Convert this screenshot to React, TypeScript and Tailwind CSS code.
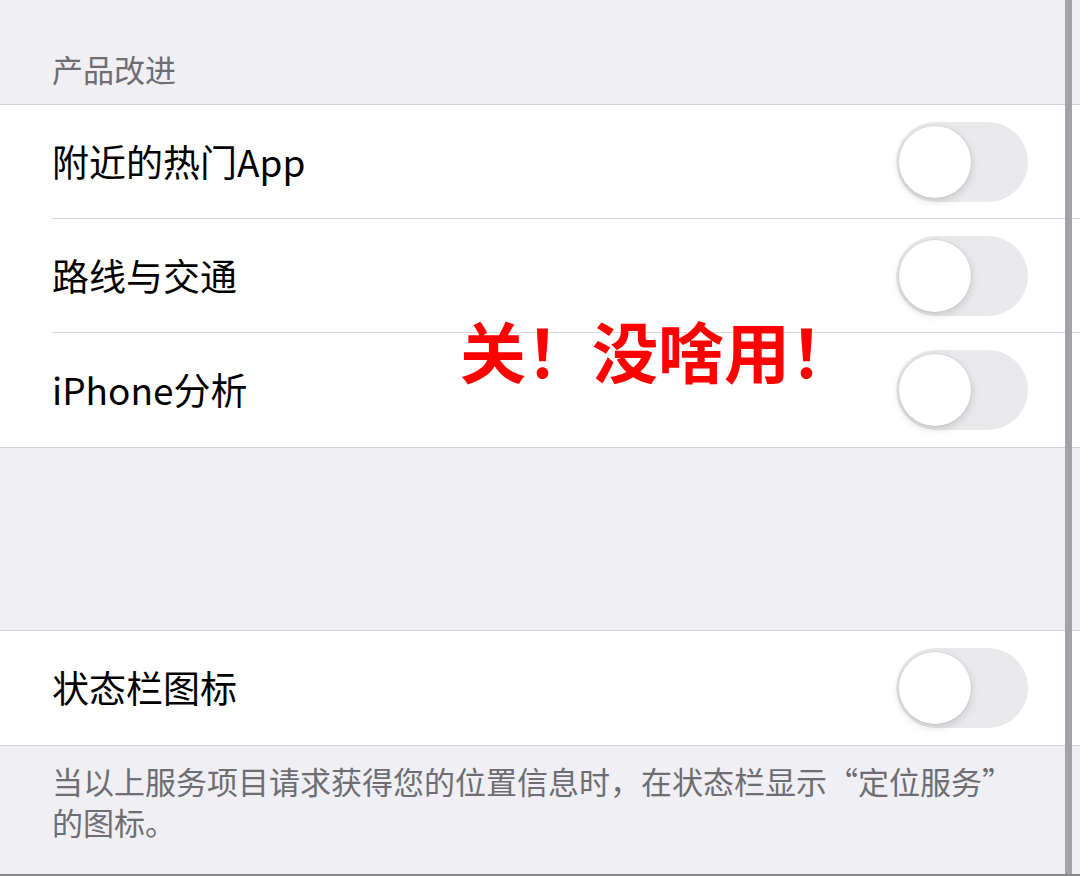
import React from "react";

function Toggle() {
  return (
    <div className="relative h-[80px] w-[132px] shrink-0 rounded-full bg-[#e9e9eb]">
      <div className="absolute left-[3px] top-[4px] h-[72px] w-[72px] rounded-full bg-white shadow-[0_3px_8px_rgba(0,0,0,0.15),0_0_0_1px_rgba(0,0,0,0.04)]" />
    </div>
  );
}

function Row({ label, last }: { label: string; last?: boolean }) {
  return (
    <div className="flex h-[114px] items-center pl-[52px]">
      <div className={`flex h-full flex-1 items-center justify-between pr-[52px] ${last ? "" : "border-b border-[#d8d8dc]"}`}>
        <span className="text-[37px] text-black">{label}</span>
        <Toggle />
      </div>
    </div>
  );
}

export default function App() {
  const font = { fontFamily: '"Noto Sans CJK SC", "Noto Sans", sans-serif' };

  return (
    <div className="relative h-[876px] w-[1080px] overflow-hidden bg-[#f0eff4]" style={font}>
      <div className="flex h-[104px] items-end px-[52px] pb-[12px]">
        <span className="text-[31px] text-[#6d6d72]">产品改进</span>
      </div>

      <div className="border-y border-[#d1d1d6] bg-white">
        <Row label="附近的热门App" />
        <Row label="路线与交通" />
        <Row label="iPhone分析" last />
      </div>

      <div className="h-[182px]" />

      <div className="border-y border-[#d1d1d6] bg-white">
        <Row label="状态栏图标" last />
      </div>

      <p className="px-[52px] pt-[14px] text-[31px] leading-[41px] text-[#6d6d72]">
        当以上服务项目请求获得您的位置信息时，在状态栏显示“定位服务”
        <br />
        的图标。
      </p>

      {/* red annotation */}
      <div className="absolute left-[460px] top-[309px] text-[66px] font-bold leading-[80px] text-[#ff0000]">
        关！没啥用！
      </div>

      {/* device edge */}
      <div className="absolute right-[8px] top-0 h-full w-[7px] bg-[#a3a3a7]" />
      <div className="absolute bottom-0 left-0 h-[2px] w-full bg-[#8a8a8e]" />
    </div>
  );
}
